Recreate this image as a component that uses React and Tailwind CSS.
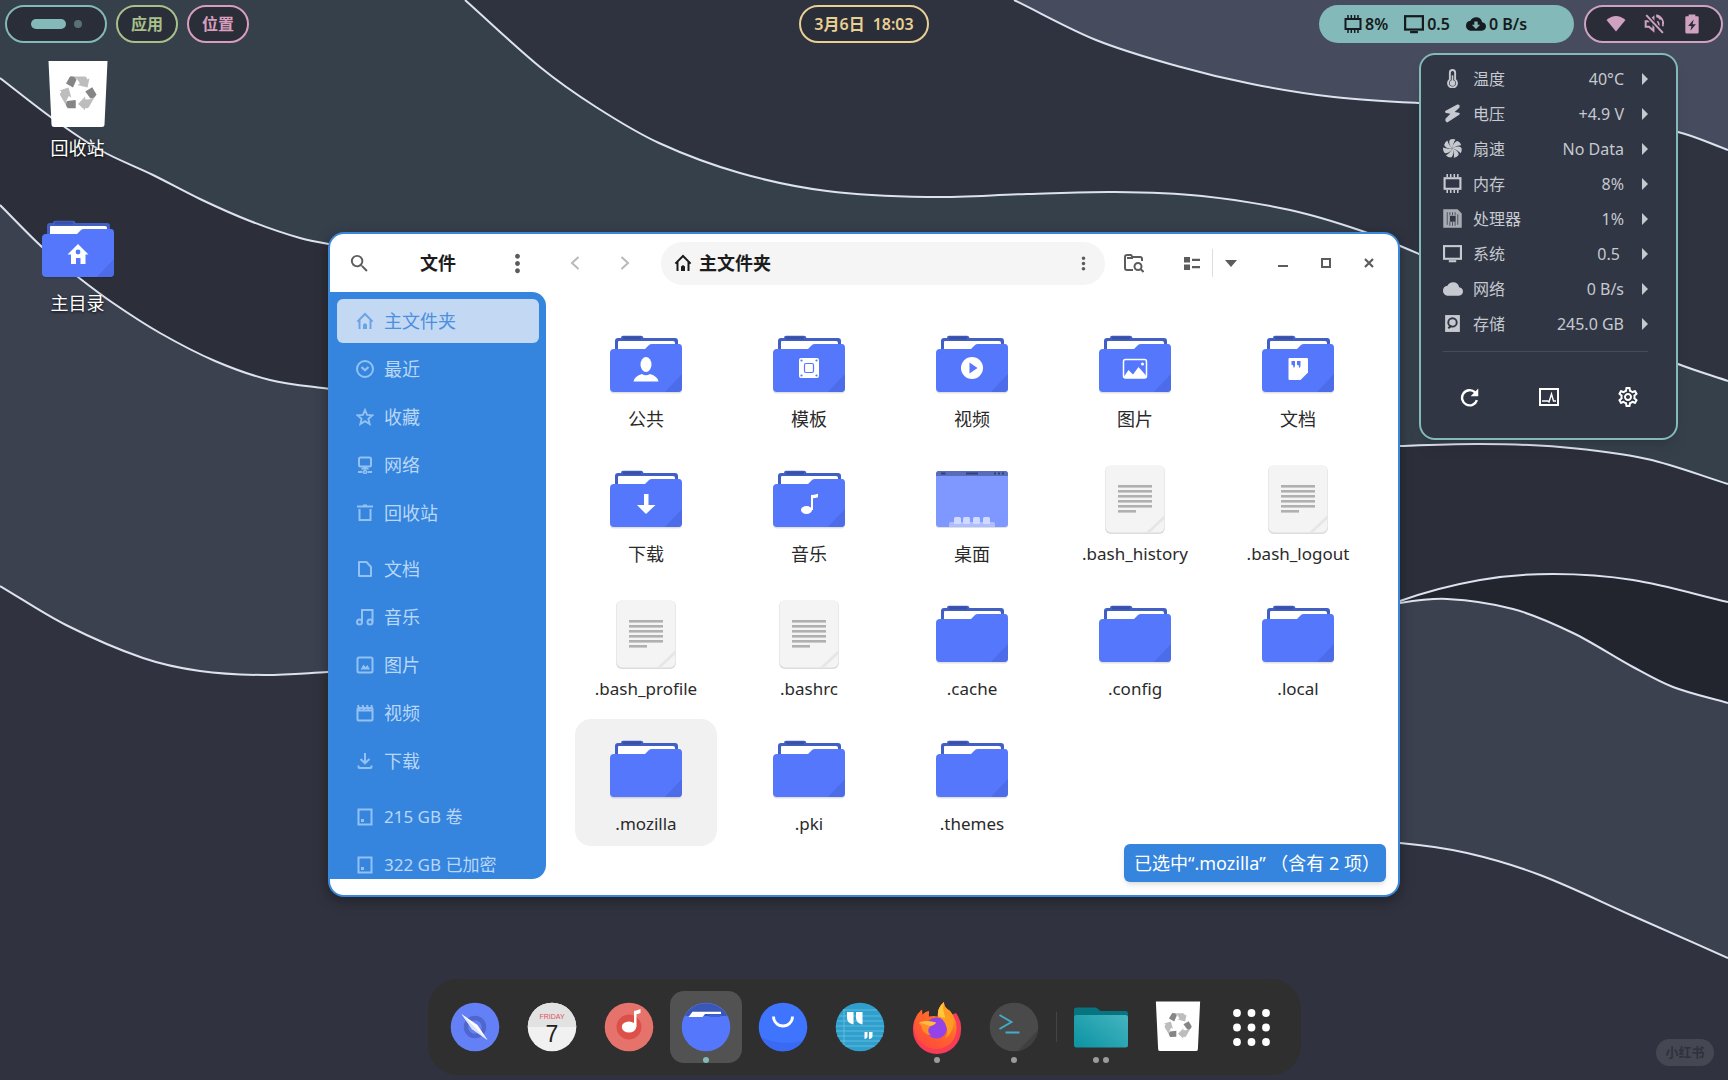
import clsx from 'clsx';
import {
  MdCloud,
  MdCloudDownload,
  MdMoreVert,
  MdOutlineSettings,
  MdSearch,
} from 'react-icons/md';

/* ---------- wallpaper ---------- */

// Smooth curve through points that run left to right, as cubic segments
function curve(points) {
  const slope = (i) => {
    const a = points[Math.max(i - 1, 0)];
    const b = points[Math.min(i + 1, points.length - 1)];
    return (b[1] - a[1]) / (b[0] - a[0]);
  };
  let d = `M${points[0][0]} ${points[0][1]}`;
  for (let i = 0; i < points.length - 1; i++) {
    const [x1, y1] = points[i];
    const [x2, y2] = points[i + 1];
    const third = (x2 - x1) / 3;
    d += `C${x1 + third} ${y1 + slope(i) * third} ${x2 - third} ${y2 - slope(i + 1) * third} ${x2} ${y2}`;
  }
  return d;
}

const WAVES = [
  {
    fill: '#2f333f',
    close: 'V0H465Z',
    points: [[465, 0], [540, 67], [596, 107], [659, 143], [740, 173], [827, 191], [927, 197], [1027, 194], [1115, 192], [1202, 196], [1290, 210], [1362, 231], [1419, 254], [1540, 308], [1678, 364], [1728, 381]],
  },
  {
    fill: '#464c5e',
    close: 'V0H1014Z',
    points: [[1014, 0], [1096, 40], [1177, 66], [1252, 84], [1334, 97], [1418, 103], [1550, 108], [1678, 132], [1728, 150]],
  },
  {
    fill: '#2c2f3a',
    close: 'V1080H0Z',
    points: [[0, 78], [52, 118], [100, 150], [153, 175], [200, 199], [250, 221], [300, 238], [345, 247], [420, 262], [700, 350], [1100, 440], [1320, 450], [1400, 446], [1480, 444], [1560, 447], [1647, 459], [1728, 484]],
  },
  {
    fill: '#22252e',
    close: 'V1080H1200Z',
    points: [[1200, 680], [1400, 601], [1480, 580], [1553, 574], [1633, 580], [1728, 602]],
  },
  {
    fill: '#3c4150',
    close: 'V1080H0Z',
    points: [[0, 205], [42, 247], [78, 277], [113, 303], [160, 333], [215, 361], [270, 380], [330, 389], [400, 398], [700, 480], [1100, 640], [1300, 622], [1400, 603], [1447, 599], [1513, 609], [1573, 633], [1633, 667], [1673, 687], [1728, 703]],
  },
  {
    fill: '#30333f',
    close: 'V1080H0Z',
    points: [[0, 586], [66, 625], [143, 658], [200, 671], [264, 675], [328, 672], [400, 668], [800, 760], [1300, 838], [1400, 843], [1467, 853], [1540, 875], [1633, 916], [1728, 958]],
  },
];

function Wallpaper() {
  return (
    <svg className="absolute inset-0 -z-10 h-full w-full" viewBox="0 0 1728 1080" preserveAspectRatio="none" aria-hidden="true">
      <rect width="1728" height="1080" fill="#36404b" />
      {WAVES.map((wave) => (
        <g key={wave.close + wave.fill}>
          <path d={curve(wave.points) + wave.close} fill={wave.fill} />
          <path d={curve(wave.points)} fill="none" stroke="#dde3ee" strokeWidth="2" />
        </g>
      ))}
    </svg>
  );
}

/* ---------- small symbolic icons ---------- */

function Glyph({ size = 18, children }) {
  return (
    <svg width={size} height={size} viewBox="0 0 18 18" fill="none" stroke="currentColor" strokeWidth="2" aria-hidden="true" className="shrink-0">
      {children}
    </svg>
  );
}

const HomeGlyph = ({ size }) => (
  <Glyph size={size}>
    <path d="M1.400 9.600 9 2l7.600 7.600M3.500 8v9M14.500 8v9" />
    <path d="M7 17v-4.500l2-1.500 2 1.500V17z" fill="currentColor" stroke="none" />
  </Glyph>
);
const RecentGlyph = () => (
  <Glyph>
    <circle cx="9" cy="9" r="8" />
    <path d="m5.500 7 3.500 3.300L12.500 7" strokeWidth="2.200" />
  </Glyph>
);
const StarGlyph = () => (
  <Glyph>
    <path d="m9 2 2.100 4.900 5.300.4-4 3.500 1.200 5.200L9 13.200 4.400 16l1.200-5.200-4-3.500 5.300-.4z" strokeWidth="1.900" />
  </Glyph>
);
const NetworkGlyph = () => (
  <Glyph>
    <rect x="3" y="1.500" width="12" height="9" rx="1.500" />
    <path d="M5.500 13h7L9 10zM9 11v4" fill="currentColor" strokeWidth="1" />
    <path d="M2 16h4.500M11.500 16H16" />
    <circle cx="9" cy="16" r="1.500" strokeWidth="1.500" />
  </Glyph>
);
const TrashGlyph = () => (
  <Glyph>
    <path d="M3.500 5v11h11V5M1 2.500h16M7 1.500h4" />
  </Glyph>
);
const DocGlyph = () => (
  <Glyph>
    <path d="M3 2h7.500L15 7v9H3z" strokeLinejoin="round" />
  </Glyph>
);
const MusicGlyph = () => (
  <Glyph>
    <circle cx="3.500" cy="14" r="2.500" />
    <circle cx="14" cy="14" r="2.500" />
    <path d="M6 14V2h10.500v12" />
  </Glyph>
);
const PictureGlyph = () => (
  <Glyph>
    <rect x="1.500" y="1.500" width="15" height="15" rx="1.500" />
    <path d="m4.500 13.500 3-5 2 2.500 2-2 2.500 4.500z" fill="currentColor" stroke="none" />
  </Glyph>
);
const VideoGlyph = () => (
  <Glyph>
    <rect x="1.500" y="4" width="15" height="12.500" rx="1" />
    <path d="M1.500 6.500h15M2 1l1.500 5M6.500 1 8 6M11 1l1.500 5M15.500 1l.5 4" />
  </Glyph>
);
const DownloadGlyph = () => (
  <Glyph>
    <path d="M9 1v10M4.500 7 9 11.300 13.500 7M2.500 13.500V15q0 1 1 1h11q1 0 1-1v-1.500" />
  </Glyph>
);
const DriveGlyph = () => (
  <Glyph>
    <rect x="2.500" y="1.500" width="13" height="15" />
    <path d="M5 12.500h3" strokeWidth="3" />
  </Glyph>
);

const ThermometerGlyph = () => (
  <Glyph size={19}>
    <path d="M6.500 10V3.500a2.500 2.500 0 0 1 5 0V10a4.200 4.200 0 1 1-5 0z" strokeWidth="1.800" />
    <circle cx="9" cy="13.300" r="2.700" fill="currentColor" stroke="none" />
    <path d="M9 6v7" strokeWidth="1.500" />
  </Glyph>
);
const VoltGlyph = () => (
  <Glyph size={19}>
    <path d="M13.500.5 2.500 6.500Q1 8 3 8.500l4 .8-4.500 4.500Q1.500 16.500 4 17.500l11-7q2-1.500 0-2.200l-4-.8L15.500 3.500Q16.500 0 13.500.5z" fill="currentColor" stroke="none" />
  </Glyph>
);
const FanGlyph = () => (
  <Glyph size={19}>
    {[0, 51, 103, 154, 206, 257, 309].map((angle) => (
      <path key={angle} d="M9 9C6.500 6.800 5 3.500 6.500.8Q9.500-.6 11.800.6 9.600 3 9 9z" transform={`rotate(${angle} 9 9)`} fill="currentColor" stroke="none" />
    ))}
  </Glyph>
);
const MemoryGlyph = ({ size = 19 }) => (
  <Glyph size={size}>
    <rect x="1.500" y="4" width="15" height="10" />
    <path d="M4 0v3M7.300 0v3M10.700 0v3M14 0v3M4 15v3M7.300 15v3M10.700 15v3M14 15v3" strokeWidth="1.500" />
  </Glyph>
);
const CpuGlyph = () => (
  <Glyph size={19}>
    <path d="M1 1h12.500L17 4.500V17H1z" fill="currentColor" opacity=".8" strokeWidth="1.500" />
    <path d="M4 3v12M6.500 3v3M9 3v3M11.500 3v3M14 5v10M6.500 12v4M9 12v4M11.500 12v4" stroke="#303644" strokeWidth=".7" />
    <rect x="6.500" y="6.500" width="5.500" height="5.500" fill="#303644" stroke="none" />
  </Glyph>
);
const MonitorGlyph = ({ size = 19 }) => (
  <Glyph size={size}>
    <rect x="1" y="2" width="16" height="12" />
    <path d="M5.500 16.300h7" />
  </Glyph>
);
const DiskGlyph = () => (
  <Glyph size={19}>
    <path d="M2 1h14v16H2z" fill="currentColor" stroke="none" />
    <circle cx="9" cy="8" r="4" stroke="#303644" strokeWidth="1.800" />
    <path d="M5 13.500 8 11" stroke="#303644" />
  </Glyph>
);
const MutedGlyph = () => (
  <Glyph size={20}>
    <path d="M1.500 6.500h3L8.500 3v12l-4-3.500h-3z" strokeWidth="1.800" />
    <path d="M11 2q3 1 4 3M12 6.500q2 2 1 5M17 6v5M11 1q6 1.500 6.500 8" strokeWidth="1.500" />
    <path d="m2 1 15 16" stroke="#2a2d38" strokeWidth="4" />
    <path d="m2 1 15 16" strokeWidth="1.800" />
  </Glyph>
);
const BatteryGlyph = () => (
  <Glyph size={20}>
    <path d="M6 2V.5h6V2h2q1 0 1 1v13.500q0 1-1 1H4q-1 0-1-1V3q0-1 1-1z" fill="currentColor" stroke="none" />
    <path d="M10.500 5 5.500 10.800h3L7.500 15l5-5.800h-3z" fill="#2a2d38" stroke="none" />
  </Glyph>
);
const RefreshGlyph = () => (
  <Glyph size={19}>
    <path d="M16 11.500A7.200 7.200 0 1 1 14.300 4.200" strokeWidth="2.300" />
    <path d="M17.300.5v7.300H10z" fill="currentColor" stroke="none" />
  </Glyph>
);

/* ---------- file icons, all on a 72px box ---------- */

const EMBLEMS = {
  home: (
    <g>
      <path d="M36 30 46.500 40.500H43.500V50H38.500V44H34V50H29V40.500H25.500z" fill="#fff" />
      <circle cx="36" cy="38" r="2.400" fill="#5477fb" />
    </g>
  ),
  person: (
    <g fill="#fff">
      <ellipse cx="36" cy="35.500" rx="5.500" ry="7.500" />
      <path d="M23.500 52.500q1-5.500 8.500-7.500 4 2.500 8 0 7.500 2 8.500 7.500z" />
    </g>
  ),
  template: (
    <g>
      <rect x="26" y="29" width="20" height="20" rx="2" fill="#fff" />
      <rect x="31.500" y="34.500" width="9" height="9" rx="1.500" fill="none" stroke="#5477fb" strokeWidth="1.200" />
      {[[28.500, 31.500], [43.500, 31.500], [28.500, 46.500], [43.500, 46.500]].map(([x, y]) => (
        <circle key={`${x}-${y}`} cx={x} cy={y} r="1.100" fill="#5477fb" />
      ))}
    </g>
  ),
  play: (
    <g>
      <circle cx="36" cy="39" r="11" fill="#fff" />
      <path d="M33.500 33.500v11l8-5.500z" fill="#5477fb" />
    </g>
  ),
  image: (
    <g>
      <rect x="24.500" y="30.500" width="23" height="18.500" rx="2" fill="none" stroke="#fff" strokeWidth="1.500" />
      <path d="M25 47.500 29.500 41l4.500 4.500L39.500 38l8 9v2H25z" fill="#fff" />
      <circle cx="43.500" cy="35" r="1.500" fill="#fff" />
    </g>
  ),
  quote: (
    <g>
      <path d="M26.500 30q0-1 1-1H45q1 0 1 1v13.500L38.500 51h-11q-1 0-1-1z" fill="#fff" />
      <path d="M29.500 32h3.500v4.500q0 1.500-1.300 2.500l-.7-3h-1.500zM35 32h3.500v4.500q0 1.500-1.300 2.500l-.7-3H35z" fill="#5477fb" />
    </g>
  ),
  down: <path d="M34 30h4.500v11h7L36 50l-9-9h7z" fill="#fff" />,
  note: (
    <g fill="#fff">
      <ellipse cx="33.500" cy="46" rx="5.500" ry="4" />
      <path d="M38 46V31q3 0 7-1.200v3.500q-3 1-5 1V46z" />
    </g>
  ),
};

function FolderIcon({ emblem }) {
  return (
    <svg width="72" height="72" viewBox="0 0 72 72" aria-hidden="true">
      <path d="M5 25V12q0-3 3-3h3q0-2.300 2-2.300h18q2 0 2.500 2.300H65q3 0 3 3v10z" fill="#4260c4" />
      <rect x="13" y="7.500" width="18" height="3" rx="1" fill="#3a50a8" />
      <path d="M8 24V13q0-1 1-1h54q2 0 2 2v8z" fill="#fff" />
      <rect y="22" width="72" height="42.500" rx="4" fill="#000" opacity=".12" />
      <path d="M0 24q0-4 4-4h31l4-4q1-1 3-1h27q3 0 3 4v40q0 4-4 4H4q-4 0-4-4z" fill="#5477fb" />
      <path d="M55 63 72 45v14q0 4-4 4z" fill="#4a69e6" opacity=".8" />
      {emblem && EMBLEMS[emblem]}
    </svg>
  );
}

function TextFileIcon() {
  return (
    <svg width="72" height="72" viewBox="0 0 72 72" aria-hidden="true">
      <rect x="6" y="1.500" width="60" height="68.500" rx="6" fill="#dcdcdc" />
      <rect x="6.500" y="1" width="59" height="67.500" rx="6" fill="#f4f4f4" />
      <path d="M47 68.500 65.500 51v4L51 68.500z" fill="#e6e6e6" />
      {[21, 26, 31, 36, 41].map((y) => (
        <rect key={y} x="19" y={y} width="34" height="2.600" fill="#b0b0b0" />
      ))}
      <rect x="19" y="46" width="18" height="2.600" fill="#b0b0b0" />
    </svg>
  );
}

function DesktopIcon() {
  return (
    <svg width="72" height="72" viewBox="0 0 72 72" aria-hidden="true">
      <rect y="9" width="72" height="55" rx="3" fill="#000" opacity=".12" />
      <rect y="7" width="72" height="56" rx="3" fill="#7f98ff" />
      <path d="M0 12v-2q0-3 3-3h66q3 0 3 3v2z" fill="#586cb8" />
      <path d="M5 8.500h4.500v2H5zM30 8.500h12v2H30zM58 8.500h2v2h-2zM62 8.500h2v2h-2zM66 8.500h2v2h-2z" fill="#333f78" />
      <path d="M13 63v-3q0-2 2-2h42q2 0 2 2v3z" fill="#aebeff" />
      {[18, 27, 37, 47].map((x) => (
        <rect key={x} x={x} y="53" width="7" height="7" rx="1.500" fill="#d0daff" />
      ))}
    </svg>
  );
}

function TrashIcon({ size = 72 }) {
  return (
    <svg width={size} height={size} viewBox="0 0 72 72" aria-hidden="true">
      <path d="M6.500 2h59l-3 63.500q0 2.500-3 2.500h-47q-3 0-3-2.500z" fill="#fff" />
      {[0, 120, 240].map((angle) => (
        <g key={angle} transform={`translate(36 34) rotate(${angle})`}>
          <path d="M-6-16.500H7q1.500 0 2.500 3l2-1.200L9.500-5.500-.5-8l2.500-1.500L-1-14z" fill="#bdbdbd" />
          <path d="M-12-9.500-8-16.500q4-1.200 6.500 3L-5-5.500z" fill="#858585" />
        </g>
      ))}
    </svg>
  );
}

function FileIcon({ kind, emblem }) {
  if (kind === 'text') return <TextFileIcon />;
  if (kind === 'desktop') return <DesktopIcon />;
  return <FolderIcon emblem={emblem} />;
}

/* ---------- top bar ---------- */

function TopBar() {
  return (
    <header className="relative flex items-start justify-between px-[5px] pt-[5px] text-base font-semibold">
      <div className="flex gap-[9px]">
        <button type="button" aria-label="工作区" className="flex h-[38px] w-[102px] items-center justify-center gap-2 rounded-full border-2 border-[#83b9b8] bg-[#2a2e38]">
          <span className="h-2.5 w-[35px] rounded-full bg-[#83b9b8]" />
          <span className="h-2 w-2 rounded-full bg-[#5a6f78]" />
        </button>
        <button type="button" className="h-[38px] w-[62px] rounded-full border-2 border-[#a9c08a] bg-[#2a2e38] text-[#a9c08a]">应用</button>
        <button type="button" className="h-[38px] w-[62px] rounded-full border-2 border-[#d99ebd] bg-[#2a2e38] text-[#d99ebd]">位置</button>
      </div>
      <div className="absolute inset-x-0 top-[5px] flex justify-center">
        <button type="button" className="flex h-[38px] w-[130px] items-center justify-center gap-2 rounded-full border-2 border-[#e8cf93] bg-[#2a2e38] text-[#e8cf93]">
          <span>3月6日</span>
          <span>18:03</span>
        </button>
      </div>
      <div className="relative flex gap-2.5">
        <button type="button" className="flex h-[38px] w-[255px] items-center gap-4 rounded-full bg-[#83b9b8] pl-[25px] text-[#161b20]">
          <span className="flex items-center gap-[3px]"><MemoryGlyph size={18} />8%</span>
          <span className="flex items-center gap-[3px]"><MonitorGlyph size={20} />0.5</span>
          <span className="flex items-center gap-[3px]"><MdCloudDownload size={20} />0 B/s</span>
        </button>
        <button type="button" aria-label="系统菜单" className="flex h-[38px] w-[139px] items-center justify-center gap-[18px] rounded-full border-2 border-[#d0a2c2] bg-[#2a2d38] text-[#d0a2c2]">
          <svg width="20" height="20" viewBox="0 0 20 20" aria-hidden="true">
            <path d="M0.500 6q9.500-8 19 0L10 17.500z" fill="currentColor" />
          </svg>
          <MutedGlyph />
          <BatteryGlyph />
        </button>
      </div>
    </header>
  );
}

/* ---------- system monitor menu ---------- */

const SENSORS = [
  { icon: ThermometerGlyph, label: '温度', value: '40°C' },
  { icon: VoltGlyph, label: '电压', value: '+4.9 V' },
  { icon: FanGlyph, label: '扇速', value: 'No Data' },
  { icon: MemoryGlyph, label: '内存', value: '8%' },
  { icon: CpuGlyph, label: '处理器', value: '1%' },
  { icon: MonitorGlyph, label: '系统', value: '0.5 ' },
  { icon: () => <MdCloud size={20} className="-mr-px" />, label: '网络', value: '0 B/s' },
  { icon: DiskGlyph, label: '存储', value: '245.0 GB' },
];

function MonitorMenu() {
  return (
    <aside className="absolute right-[50px] top-[53px] z-20 h-[387px] w-[259px] rounded-2xl border-2 border-[#83b9b8] bg-[#303644] pl-[22px] pr-[28px] pt-1.5 text-base text-[#c6c9cf] shadow-lg">
      <ul>
        {SENSORS.map(({ icon: Icon, label, value }) => (
          <li key={label}>
            <button type="button" className="flex h-[35px] w-full items-center">
              <Icon />
              <span className="ml-[11px]">{label}</span>
              <span className="ml-auto whitespace-pre">{value}</span>
              <svg width="6" height="12" viewBox="0 0 6 12" className="ml-[18px]" aria-hidden="true">
                <path d="M0 0 6 6 0 12z" fill="currentColor" />
              </svg>
            </button>
          </li>
        ))}
      </ul>
      <div className="mt-2.5 border-t border-[#474c59]" />
      <div className="mt-[33px] flex justify-between pl-3.5 pr-2 text-white">
        <button type="button" aria-label="刷新" className="flex h-6 w-6 items-center justify-center"><RefreshGlyph /></button>
        <button type="button" aria-label="系统监视器" className="flex h-6 items-center">
          <svg width="20" height="18" viewBox="0 0 20 18" fill="none" stroke="currentColor" aria-hidden="true">
            <rect x="1" y="1" width="18" height="16" strokeWidth="2" />
            <path d="M3 13h6l1 1 2.500-8 2 7H17" strokeWidth="1.400" />
          </svg>
        </button>
        <button type="button" aria-label="设置"><MdOutlineSettings size={24} /></button>
      </div>
    </aside>
  );
}

/* ---------- file manager window ---------- */

const PLACES = [
  [
    { icon: HomeGlyph, label: '主文件夹', active: true },
    { icon: RecentGlyph, label: '最近' },
    { icon: StarGlyph, label: '收藏' },
    { icon: NetworkGlyph, label: '网络' },
    { icon: TrashGlyph, label: '回收站' },
  ],
  [
    { icon: DocGlyph, label: '文档' },
    { icon: MusicGlyph, label: '音乐' },
    { icon: PictureGlyph, label: '图片' },
    { icon: VideoGlyph, label: '视频' },
    { icon: DownloadGlyph, label: '下载' },
  ],
  [
    { icon: DriveGlyph, label: '215 GB 卷', volume: true },
    { icon: DriveGlyph, label: '322 GB 已加密', volume: true },
  ],
];

const FILES = [
  { name: '公共', emblem: 'person' },
  { name: '模板', emblem: 'template' },
  { name: '视频', emblem: 'play' },
  { name: '图片', emblem: 'image' },
  { name: '文档', emblem: 'quote' },
  { name: '下载', emblem: 'down' },
  { name: '音乐', emblem: 'note' },
  { name: '桌面', kind: 'desktop' },
  { name: '.bash_history', kind: 'text' },
  { name: '.bash_logout', kind: 'text' },
  { name: '.bash_profile', kind: 'text' },
  { name: '.bashrc', kind: 'text' },
  { name: '.cache' },
  { name: '.config' },
  { name: '.local' },
  { name: '.mozilla', selected: true },
  { name: '.pki' },
  { name: '.themes' },
];

function HeaderButton({ label, className, children }) {
  return (
    <button type="button" aria-label={label} className={clsx('flex h-9 w-9 shrink-0 items-center justify-center text-[#5c5c5c]', className)}>
      {children}
    </button>
  );
}

function WindowHeader() {
  return (
    <div className="flex h-[58px] items-center">
      <div className="flex w-[216px] shrink-0 items-center px-[11px]">
        <HeaderButton label="搜索"><MdSearch size={23} /></HeaderButton>
        <h1 className="flex-1 text-center text-lg font-bold text-[#1c1c1c]">文件</h1>
        <HeaderButton label="主菜单"><MdMoreVert size={29} /></HeaderButton>
      </div>
      <div className="flex flex-1 items-center px-[11px]">
        <HeaderButton label="后退">
          <svg width="10" height="16" viewBox="0 0 10 16" fill="none" stroke="#b9b9b9" strokeWidth="2" aria-hidden="true"><path d="M8.500 2 2 8l6.500 6" /></svg>
        </HeaderButton>
        <HeaderButton label="前进" className="ml-3.5">
          <svg width="10" height="16" viewBox="0 0 10 16" fill="none" stroke="#b9b9b9" strokeWidth="2" aria-hidden="true"><path d="M1.500 2 8 8l-6.500 6" /></svg>
        </HeaderButton>
        <div className="ml-[18px] flex h-[43px] flex-1 items-center rounded-full bg-[#f5f5f5] pl-[13px] pr-1 text-[#1c1c1c]">
          <button type="button" className="flex items-center gap-[7px] text-lg font-bold">
            <HomeGlyph size={18} />
            主文件夹
          </button>
          <HeaderButton label="文件夹菜单" className="ml-auto"><MdMoreVert size={21} /></HeaderButton>
        </div>
        <HeaderButton label="搜索文件夹" className="ml-[11px]">
          <svg width="20" height="19" viewBox="0 0 20 19" fill="none" stroke="currentColor" strokeWidth="2" aria-hidden="true">
            <path d="M9 16H3q-2 0-2-2V3q0-2 2-2h4l1.500 2H16q2 0 2 2v2M3 4h6" />
            <circle cx="14" cy="12.500" r="3.500" />
            <path d="m16.500 15 3 3" />
          </svg>
        </HeaderButton>
        <HeaderButton label="列表视图" className="ml-[22px]">
          <svg width="16" height="13" viewBox="0 0 16 13" fill="currentColor" aria-hidden="true">
            <path d="M0 0h6v5.500H0zM0 7.500h6V13H0zM8 1.700h8V4H8zM8 9h8v2.300H8z" />
          </svg>
        </HeaderButton>
        <div className="ml-0.5 h-7 w-px bg-[#dedede]" />
        <HeaderButton label="视图选项">
          <svg width="12" height="7" viewBox="0 0 12 7" fill="currentColor" aria-hidden="true"><path d="M0 0h12L6 7z" /></svg>
        </HeaderButton>
        <HeaderButton label="最小化" className="ml-4">
          <svg width="10" height="10" viewBox="0 0 10 10" stroke="currentColor" strokeWidth="2" aria-hidden="true"><path d="M0 8h10" /></svg>
        </HeaderButton>
        <HeaderButton label="最大化" className="ml-[7px]">
          <svg width="10" height="10" viewBox="0 0 10 10" fill="none" stroke="currentColor" strokeWidth="2" aria-hidden="true"><rect x="1" y="1" width="8" height="8" /></svg>
        </HeaderButton>
        <HeaderButton label="关闭" className="ml-[7px]">
          <svg width="10" height="10" viewBox="0 0 10 10" stroke="currentColor" strokeWidth="2.200" aria-hidden="true"><path d="m1 1 8 8M9 1 1 9" /></svg>
        </HeaderButton>
      </div>
    </div>
  );
}

function Sidebar() {
  return (
    <nav className="h-[587px] w-[216px] shrink-0 overflow-hidden rounded-r-[14px] bg-[#3584de] px-[7px] pt-[7px]">
      {PLACES.map((group, index) => (
        <ul key={index} className="mb-3 space-y-1">
          {group.map(({ icon: Icon, label, active, volume }) => (
            <li key={label}>
              <a
                href="#"
                className={clsx(
                  'flex h-11 items-center gap-2.5 rounded-md pl-[19px]',
                  volume ? 'text-[17px]' : 'text-lg',
                  active ? 'bg-[#c3d8f2] text-[#4a8fe0]' : 'text-[#b9d7f7]',
                )}
              >
                <span className={active ? 'text-[#6ba4e6]' : 'text-[#93c1f1]'}><Icon /></span>
                {label}
              </a>
            </li>
          ))}
        </ul>
      ))}
    </nav>
  );
}

function FileManager() {
  return (
    <section className="relative mt-[189px] h-[665px] flex-1 overflow-hidden rounded-2xl border-2 border-[#3a86da] bg-white shadow-[0_4px_14px_rgba(0,0,0,0.35)]">
      <WindowHeader />
      <div className="flex">
        <Sidebar />
        <ul className="grid flex-1 auto-rows-[127px] grid-cols-5 content-start gap-x-[21px] gap-y-2 px-[29px] pt-[22px]">
          {FILES.map(({ name, kind, emblem, selected }) => (
            <li key={name}>
              <button
                type="button"
                className={clsx(
                  'flex h-full w-full flex-col items-center rounded-2xl pt-[15px] text-[#2a2a2a]',
                  selected && 'bg-[#f1f1f1]',
                )}
              >
                <FileIcon kind={kind} emblem={emblem} />
                <span className={clsx('mt-1.5', name.startsWith('.') ? 'text-[17px] leading-6' : 'text-lg leading-6')}>{name}</span>
              </button>
            </li>
          ))}
        </ul>
      </div>
      <div className="absolute bottom-[13px] right-3 flex h-[38px] w-[262px] items-center whitespace-pre rounded-md bg-[#3584de] pl-2.5 text-lg text-white shadow-md">
        已选中“.mozilla” （含有 2 项）
      </div>
    </section>
  );
}

/* ---------- desktop shortcuts ---------- */

function DesktopShortcuts() {
  return (
    <div className="w-[328px] shrink-0 pt-4">
      <ul className="flex w-[155px] flex-col gap-[54px] text-lg leading-6 text-white">
        <li className="flex flex-col items-center">
          <TrashIcon />
          <a href="#" className="mt-[5px] [text-shadow:0_1px_3px_rgba(0,0,0,0.9)]">回收站</a>
        </li>
        <li className="flex flex-col items-center">
          <FolderIcon emblem="home" />
          <a href="#" className="mt-[5px] [text-shadow:0_1px_3px_rgba(0,0,0,0.9)]">主目录</a>
        </li>
      </ul>
    </div>
  );
}

/* ---------- dock ---------- */

function AppDisc({ fill, children }) {
  return (
    <svg width="50" height="50" viewBox="-1 -1 50 50" className="overflow-visible" aria-hidden="true">
      <circle cx="24" cy="24" r="24.300" fill={fill} />
      {children}
    </svg>
  );
}

const BrowserApp = () => (
  <AppDisc fill="#6480f6">
    <circle cx="24" cy="24" r="9" fill="none" stroke="#4f66cc" strokeWidth="4.500" />
    <path d="M10.500 11 26.500 22 36.500 37 21 26z" fill="#fff" />
    <path d="M10.500 11 23.700 24 36.500 37 21 26z" fill="#dde2fb" />
  </AppDisc>
);
const CalendarApp = () => (
  <AppDisc fill="#f1f1f1">
    <path d="M-.3 24a24.300 24.300 0 0 1 48.600 0z" fill="#e2e2e2" />
    <g textAnchor="middle" className="font-['Liberation_Sans',sans-serif]">
      <text x="24" y="16" fontSize="7" fill="#e05260">FRIDAY</text>
      <text x="24" y="39" fontSize="23" fill="#222">7</text>
    </g>
  </AppDisc>
);
const MusicApp = () => (
  <AppDisc fill="#e6736b">
    <circle cx="24" cy="24" r="12.500" fill="#dc5049" />
    <ellipse cx="24" cy="24" rx="7.200" ry="5.600" fill="#fff" />
    <path d="M29 24V8q3-.3 6.500-2v4q-2 1-4 1.200V24z" fill="#fff" />
  </AppDisc>
);
const FilesApp = () => (
  <AppDisc fill="#5477fb">
    <path d="M3.500 11.500A24.300 24.300 0 0 1 44.500 11.500V13H3.500z" fill="#3b57b5" />
    <path d="M28 11.500h12l-2 2.500H27z" fill="#3f60d6" />
    <path d="M6.500 14 10.500 8.700H39V11H23L20.500 14z" fill="#fff" />
  </AppDisc>
);
const StoreApp = () => (
  <AppDisc fill="#3f74ff">
    <path d="M2 34q18 9 42 4A24.300 24.300 0 0 1 2 34z" fill="#3a6af4" />
    <path d="M14.500 13.500a9.500 9.500 0 0 0 19 0" fill="none" stroke="#fff" strokeWidth="2.800" />
  </AppDisc>
);
const QuotesApp = () => (
  <AppDisc fill="#2f9fce">
    <path d="M7 7h34M3 13h42M1 18h46M0 23h48M0 28h48M1 33h46M4 38h40M9 43h30M8 6v36" stroke="#6cc3e0" strokeWidth=".8" />
    <path d="M11 9h6.500v12.500Q11 20 11 15zM20 9h6.500v12.500Q20 20 20 15zM28.500 29h3v4q0 2.500-3 3zM33 29h3.500v4q0 2.500-3.500 3z" fill="#fff" />
  </AppDisc>
);
const FirefoxApp = () => (
  <svg width="50" height="50" viewBox="-1 -1 50 50" className="overflow-visible" aria-hidden="true">
    <defs>
      <linearGradient id="fox-body" x1="1" y1="0" x2="0.300" y2="1">
        <stop offset="0" stopColor="#ffb52e" />
        <stop offset=".5" stopColor="#ff6a2a" />
        <stop offset="1" stopColor="#ff4a3d" />
      </linearGradient>
    </defs>
    <path d="M43 10Q49 18 48 27A24 24 0 0 1 0 27Q-.5 18 5 12l3 -5 1.500 5Q12 8.500 16 8.500L15.500 14 33 14z" fill="#f93c55" />
    <path d="M9 6.500 9.500 12Q12 8.500 16 8l-.3 5.500q5-1 9 0Q24 5 31-1q-.5 5 6 9 7 8 6.500 18A20 20 0 0 1 24 46 23 23 0 0 1 1 25Q0 14 9 6.500z" fill="url(#fox-body)" />
    <circle cx="23.500" cy="25" r="10.500" fill="#9343e8" />
    <path d="M25 13.500Q24 5 31-1q-.5 5 6 9 4 5 4 12-2 12-9 15 4-6 1-12-2-7-8-9.500z" fill="#ff9a22" />
    <path d="M25 13.500Q24 5 31-1 29 6 32.500 15z" fill="#ffc83a" />
    <path d="M6 20q6-3 17-.5-1 2.500-6 4-4 5 1 9-9-2-9.500-9z" fill="#ff8d28" />
    <path d="M6 19.500q6-3 17 0-1 2-6 3.500z" fill="#ffbd3e" />
  </svg>
);
const TerminalApp = () => (
  <AppDisc fill="#4a4a4a">
    <path d="M28 48 48 27A24.300 24.300 0 0 1 28 48z" fill="#404040" />
    <path d="m9.500 12 12 7-12 7M15.500 29.500h14" fill="none" stroke="#43aecb" strokeWidth="1.800" />
  </AppDisc>
);
const TealFolder = () => (
  <svg width="54" height="50" viewBox="0 0 54 50" aria-hidden="true">
    <defs>
      <linearGradient id="teal" x1="0" y1="0.800" x2="1" y2="0">
        <stop offset="0" stopColor="#1096a5" />
        <stop offset="1" stopColor="#45b5c0" />
      </linearGradient>
    </defs>
    <path d="M0 8q0-2.500 2.500-2.500H22L26.500 9H52q2 0 2 2.500V20H0z" fill="#077480" />
    <rect y="13" width="54" height="32.500" rx="2.500" fill="url(#teal)" />
  </svg>
);
const AppGrid = () => (
  <svg width="37" height="37" viewBox="0 0 37 37" fill="#fff" aria-hidden="true">
    {[4, 18.500, 33].map((y) => [4, 18.500, 33].map((x) => <circle key={`${x}-${y}`} cx={x} cy={y} r="3.900" />))}
  </svg>
);

function DockItem({ label, active, dots = 0, className, children }) {
  return (
    <button
      type="button"
      aria-label={label}
      className={clsx('relative flex h-[72px] shrink-0 items-center justify-center rounded-[14px]', active && 'bg-[#525252]', className || 'w-[72px]')}
    >
      {children}
      <span className="absolute inset-x-0 bottom-0 flex justify-center gap-1">
        {Array.from({ length: dots }, (_, i) => (
          <span key={i} className={clsx('h-1.5 w-1.5 rounded-full', active ? 'bg-[#83b9b8]' : 'bg-[#9b9b9b]')} />
        ))}
      </span>
    </button>
  );
}

function Dock() {
  return (
    <footer className="mt-auto flex justify-center pb-[5px]">
      <div className="flex h-24 items-center gap-[5px] rounded-[30px] bg-[#2f2f2f] pl-[11px] pr-4">
        <DockItem label="浏览器"><BrowserApp /></DockItem>
        <DockItem label="日历"><CalendarApp /></DockItem>
        <DockItem label="音乐"><MusicApp /></DockItem>
        <DockItem label="文件" active dots={1}><FilesApp /></DockItem>
        <DockItem label="软件"><StoreApp /></DockItem>
        <DockItem label="文本"><QuotesApp /></DockItem>
        <DockItem label="Firefox" dots={1}><FirefoxApp /></DockItem>
        <DockItem label="终端" dots={1}><TerminalApp /></DockItem>
        <span className="ml-px mr-[3px] h-[30px] w-px bg-[#454545]" />
        <DockItem label="文件夹" dots={2}><TealFolder /></DockItem>
        <DockItem label="回收站"><TrashIcon size={54} /></DockItem>
        <DockItem label="显示应用" className="w-[66px]"><AppGrid /></DockItem>
      </div>
    </footer>
  );
}

export default function App() {
  return (
    <div className="relative isolate flex min-h-screen flex-col overflow-hidden font-['Noto_Sans','Noto_Sans_CJK_SC',sans-serif]">
      <Wallpaper />
      <TopBar />
      <MonitorMenu />
      <main className="flex">
        <DesktopShortcuts />
        <FileManager />
        <div className="w-[328px] shrink-0" />
      </main>
      <Dock />
      <div className="absolute bottom-3.5 right-3.5 flex h-[27px] w-[58px] items-center justify-center rounded-full bg-[#454853] text-[13px] font-bold text-[#2f323e]">
        小红书
      </div>
    </div>
  );
}
